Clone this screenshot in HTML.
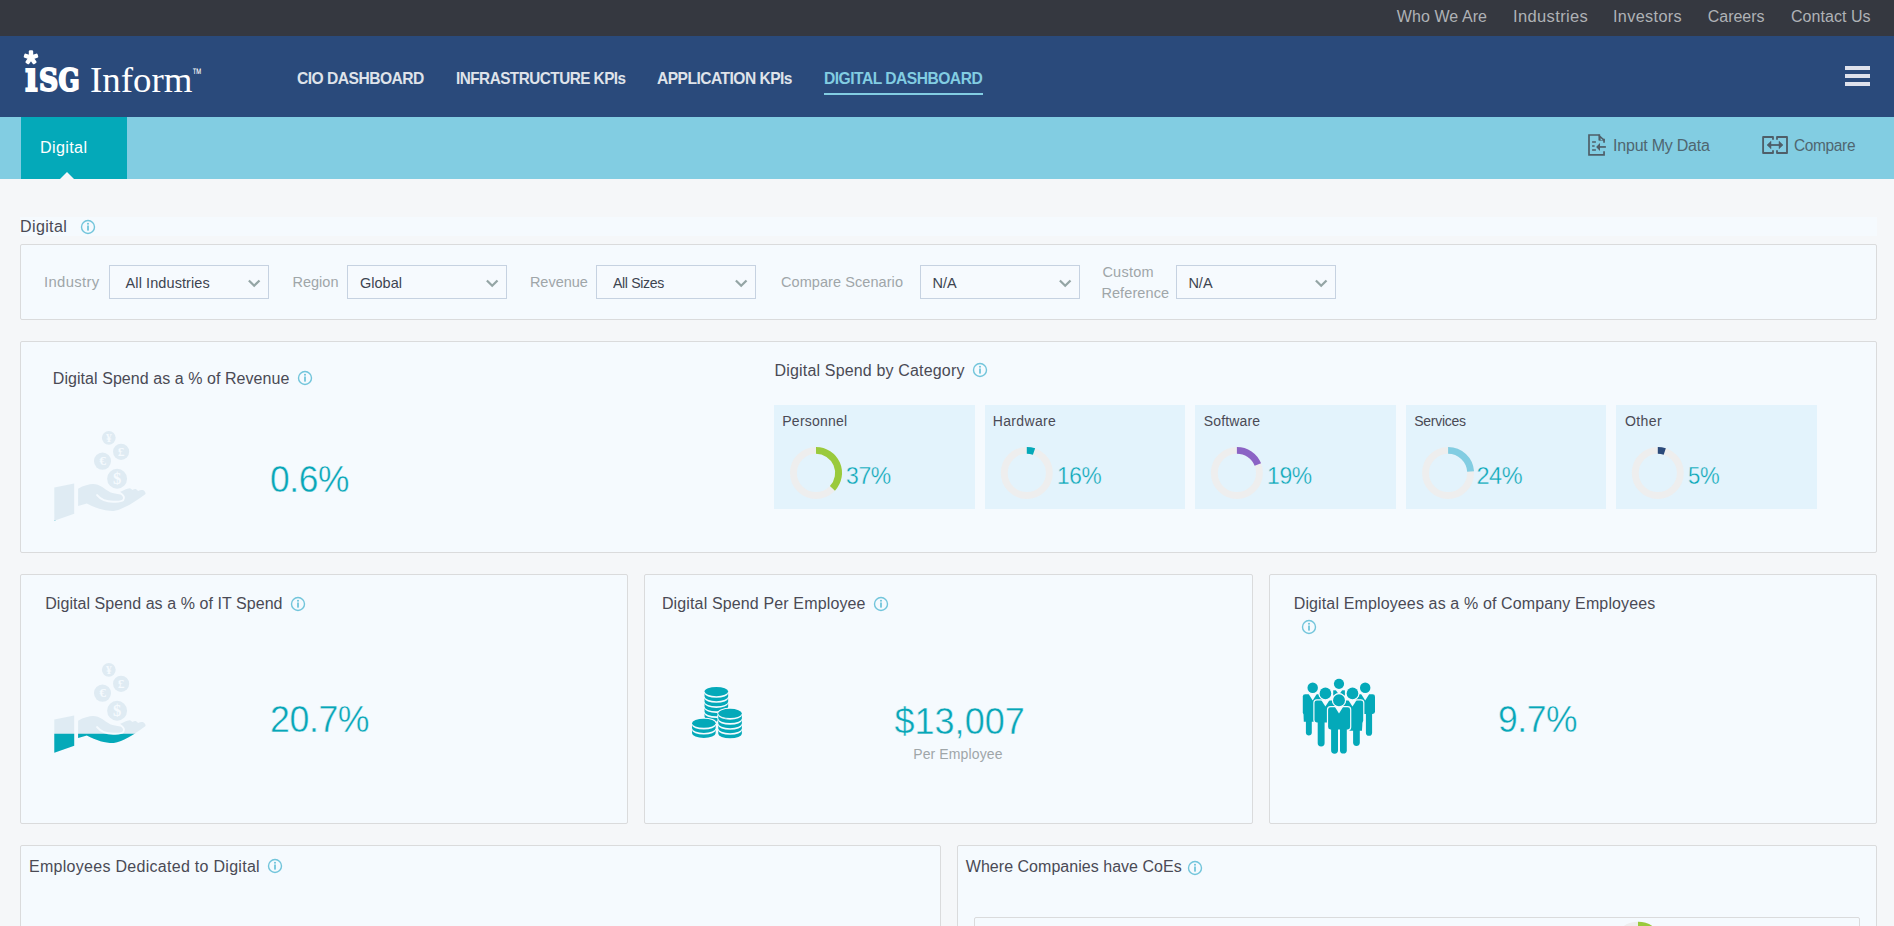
<!DOCTYPE html>
<html lang="en"><head><meta charset="utf-8"><title>ISG Inform - Digital Dashboard</title>
<style>

html,body{margin:0;padding:0;}
body{width:1894px;height:926px;overflow:hidden;background:#f5f7f9;font-family:"Liberation Sans",sans-serif;position:relative;}
.abs{position:absolute;}
.t{position:absolute;white-space:nowrap;transform-origin:0 50%;display:block;margin:0;padding:0;font-weight:400;}
#topbar{position:absolute;left:0;top:0;width:1894px;height:36px;background:#353840;}
#navbar{position:absolute;left:0;top:36px;width:1894px;height:81px;background:#2a4a7b;}
#subbar{position:absolute;left:0;top:117px;width:1894px;height:62px;background:#82cde2;}
#tab{position:absolute;left:21px;top:117px;width:106px;height:62px;background:#04a9b9;}
#tri{position:absolute;left:60px;top:172px;width:0;height:0;border-left:7px solid transparent;border-right:7px solid transparent;border-bottom:7px solid #f5f7f9;}
#navline{position:absolute;left:824px;top:93px;width:159px;height:2px;background:#82cde2;}
.hb{position:absolute;left:1845px;width:25px;height:4px;background:#dfe2ec;}
#strip{position:absolute;left:20px;top:217px;width:1857px;height:19px;background:#f5fafe;}
.panel{position:absolute;box-sizing:border-box;border-radius:2px;background:#f5fafe;border:1px solid #dadbdc;}
.sel{position:absolute;box-sizing:border-box;top:265px;width:160px;height:34px;border:1px solid #c6d2e1;background:#f6fafe;}
.cat{position:absolute;top:405px;height:104px;width:200.4px;background:#e3f3fc;}
svg{position:absolute;overflow:visible;}

</style></head>
<body>
<div id="topbar"></div><div id="navbar"></div><div id="subbar"></div><div id="tab"></div><div id="tri"></div><div id="navline"></div>
<div class="hb" style="top:66px"></div>
<div class="hb" style="top:74px"></div>
<div class="hb" style="top:82px"></div>
<svg style="left:0;top:0" width="260" height="117"><rect x="28.8" y="50.300000000000004" width="4.4" height="7.8" rx="1.3" fill="#fff" transform="rotate(0 31 57.6)"/><rect x="28.8" y="50.300000000000004" width="4.4" height="7.8" rx="1.3" fill="#fff" transform="rotate(72 31 57.6)"/><rect x="28.8" y="50.300000000000004" width="4.4" height="7.8" rx="1.3" fill="#fff" transform="rotate(144 31 57.6)"/><rect x="28.8" y="50.300000000000004" width="4.4" height="7.8" rx="1.3" fill="#fff" transform="rotate(216 31 57.6)"/><rect x="28.8" y="50.300000000000004" width="4.4" height="7.8" rx="1.3" fill="#fff" transform="rotate(288 31 57.6)"/><text x="25.1" y="90.8" font-size="42" stroke-width="2" textLength="12.6" font-family="DejaVu Serif, Liberation Serif, serif" font-weight="700" fill="#fff" stroke="#fff" stroke-linejoin="miter" lengthAdjust="spacingAndGlyphs">ı</text><text x="38.9" y="90.7" font-size="31.3" stroke-width="2" textLength="19.2" font-family="DejaVu Serif, Liberation Serif, serif" font-weight="700" fill="#fff" stroke="#fff" stroke-linejoin="miter" lengthAdjust="spacingAndGlyphs">S</text><text x="58.6" y="90.7" font-size="31.3" stroke-width="2" textLength="21.2" font-family="DejaVu Serif, Liberation Serif, serif" font-weight="700" fill="#fff" stroke="#fff" stroke-linejoin="miter" lengthAdjust="spacingAndGlyphs">G</text><text x="90" y="91.9" font-family="Liberation Serif, serif" font-size="36" fill="#fff" textLength="102.5" lengthAdjust="spacingAndGlyphs">Inform</text><text x="192" y="77.6" font-family="Liberation Sans, sans-serif" font-size="14" fill="#fff" textLength="9.5" lengthAdjust="spacingAndGlyphs">™</text></svg>
<svg style="left:0;top:0" width="1894" height="926"><path d="M1604.05 142.7 V139.6 H1599.3 V135 H1589 V154.95 H1604.05 V151.2" fill="none" stroke="#4f5e68" stroke-width="1.7" stroke-linejoin="miter"/><path d="M1598.7 134.2 L1604.9 139.9 L1604.9 140.4 L1599.3 140.4 Z" fill="#4f5e68"/><path d="M1600.6 140.3 L1602.9 140.3 L1600.6 138.1 Z" fill="#82cde2"/><path d="M1599.5 146.95 H1605.9" fill="none" stroke="#4f5e68" stroke-width="1.7"/><path d="M1596.1 146.95 L1600 143 L1600 150.9 Z" fill="#4f5e68"/><path d="M1592.1 142 H1595.9 M1592.1 146 H1594.6 M1592.1 150 H1595.9" fill="none" stroke="#4f5e68" stroke-width="1.5"/></svg>
<svg style="left:0;top:0" width="1894" height="926"><path d="M1773 139.7 V137 H1763.1 V153 H1773 V150.2 M1777 139.7 V137 H1787 V153 H1777 V150.2" fill="none" stroke="#4f5e68" stroke-width="1.85" stroke-linejoin="round"/><path d="M1770 145 H1780" fill="none" stroke="#4f5e68" stroke-width="1.8"/><path d="M1767 145 L1771 141.2 L1771 148.8 Z M1783.05 145 L1779.05 141.2 L1779.05 148.8 Z" fill="#4f5e68" stroke="#4f5e68" stroke-width="0.5" stroke-linejoin="round"/></svg>
<div id="strip"></div>
<div class="panel" style="left:20px;top:244px;width:1857px;height:76px"></div>
<div class="panel" style="left:20px;top:341px;width:1857px;height:212px"></div>
<div class="panel" style="left:20px;top:574px;width:608px;height:250px"></div>
<div class="panel" style="left:644px;top:574px;width:609px;height:250px"></div>
<div class="panel" style="left:1269px;top:574px;width:608px;height:250px"></div>
<div class="panel" style="left:20px;top:845px;width:921px;height:120px"></div>
<div class="panel" style="left:957px;top:845px;width:920px;height:120px"></div>
<div class="panel" style="left:974px;top:917px;width:886px;height:60px"></div>
<div class="sel" style="left:109px"></div>
<div class="sel" style="left:347px"></div>
<div class="sel" style="left:596px"></div>
<div class="sel" style="left:920px"></div>
<div class="sel" style="left:1176px"></div>
<svg style="left:248px;top:279px" width="13" height="9" viewBox="0 0 13 9"><path d="M0.9 1.5 L6.2 6.7 L11.5 1.5" fill="none" stroke="#94a5a5" stroke-width="2.3" stroke-linecap="butt" stroke-linejoin="miter"/></svg>
<svg style="left:486px;top:279px" width="13" height="9" viewBox="0 0 13 9"><path d="M0.9 1.5 L6.2 6.7 L11.5 1.5" fill="none" stroke="#94a5a5" stroke-width="2.3" stroke-linecap="butt" stroke-linejoin="miter"/></svg>
<svg style="left:735px;top:279px" width="13" height="9" viewBox="0 0 13 9"><path d="M0.9 1.5 L6.2 6.7 L11.5 1.5" fill="none" stroke="#94a5a5" stroke-width="2.3" stroke-linecap="butt" stroke-linejoin="miter"/></svg>
<svg style="left:1059px;top:279px" width="13" height="9" viewBox="0 0 13 9"><path d="M0.9 1.5 L6.2 6.7 L11.5 1.5" fill="none" stroke="#94a5a5" stroke-width="2.3" stroke-linecap="butt" stroke-linejoin="miter"/></svg>
<svg style="left:1315px;top:279px" width="13" height="9" viewBox="0 0 13 9"><path d="M0.9 1.5 L6.2 6.7 L11.5 1.5" fill="none" stroke="#94a5a5" stroke-width="2.3" stroke-linecap="butt" stroke-linejoin="miter"/></svg>
<div class="cat" style="left:774px;width:201px"></div>
<div class="cat" style="left:985px;width:200px"></div>
<div class="cat" style="left:1195px;width:201px"></div>
<div class="cat" style="left:1406px;width:200px"></div>
<div class="cat" style="left:1616px;width:201px"></div>
<svg style="left:0;top:0" width="1894" height="926"><circle cx="816" cy="472.9" r="22.55" fill="none" stroke="#eeeeee" stroke-width="6.9"/><path d="M816 450.34999999999997 A22.55 22.55 0 0 1 832.44 488.34" fill="none" stroke="#9aca3c" stroke-width="6.9"/></svg>
<svg style="left:0;top:0" width="1894" height="926"><circle cx="1026.8" cy="472.9" r="22.55" fill="none" stroke="#eeeeee" stroke-width="6.9"/><path d="M1026.8 450.34999999999997 A22.55 22.55 0 0 1 1034.04 451.54" fill="none" stroke="#04a9b9" stroke-width="6.9"/></svg>
<svg style="left:0;top:0" width="1894" height="926"><circle cx="1236.9" cy="472.9" r="22.55" fill="none" stroke="#eeeeee" stroke-width="6.9"/><path d="M1236.9 450.34999999999997 A22.55 22.55 0 0 1 1257.87 464.60" fill="none" stroke="#8b63c5" stroke-width="6.9"/></svg>
<svg style="left:0;top:0" width="1894" height="926"><circle cx="1448.1" cy="472.9" r="22.55" fill="none" stroke="#eeeeee" stroke-width="6.9"/><path d="M1448.1 450.34999999999997 A22.55 22.55 0 0 1 1470.61 471.48" fill="none" stroke="#82cde2" stroke-width="6.9"/></svg>
<svg style="left:0;top:0" width="1894" height="926"><circle cx="1657.8" cy="472.9" r="22.55" fill="none" stroke="#eeeeee" stroke-width="6.9"/><path d="M1657.8 450.34999999999997 A22.55 22.55 0 0 1 1664.77 451.45" fill="none" stroke="#2a4a7b" stroke-width="6.9"/></svg>
<svg style="left:0;top:0" width="1894" height="926"><circle cx="1638" cy="947.8" r="22.55" fill="none" stroke="#eeeeee" stroke-width="6.9"/><path d="M1638 925.25 A22.55 22.55 0 0 1 1660.55 947.8" fill="none" stroke="#9aca3c" stroke-width="6.9"/></svg>
<svg style="left:80px;top:219px" width="16" height="16" viewBox="-8 -8 16 16"><circle cx="0" cy="0" r="6.5" fill="none" stroke="#72c5db" stroke-width="1.4"/><rect x="-0.9" y="-1.5" width="1.8" height="5.1" fill="#72c5db"/><circle cx="0" cy="-3.2" r="1.05" fill="#72c5db"/></svg>
<svg style="left:297px;top:370px" width="16" height="16" viewBox="-8 -8 16 16"><circle cx="0" cy="0" r="6.5" fill="none" stroke="#72c5db" stroke-width="1.4"/><rect x="-0.9" y="-1.5" width="1.8" height="5.1" fill="#72c5db"/><circle cx="0" cy="-3.2" r="1.05" fill="#72c5db"/></svg>
<svg style="left:971.8px;top:362px" width="16" height="16" viewBox="-8 -8 16 16"><circle cx="0" cy="0" r="6.5" fill="none" stroke="#72c5db" stroke-width="1.4"/><rect x="-0.9" y="-1.5" width="1.8" height="5.1" fill="#72c5db"/><circle cx="0" cy="-3.2" r="1.05" fill="#72c5db"/></svg>
<svg style="left:290px;top:595.8px" width="16" height="16" viewBox="-8 -8 16 16"><circle cx="0" cy="0" r="6.5" fill="none" stroke="#72c5db" stroke-width="1.4"/><rect x="-0.9" y="-1.5" width="1.8" height="5.1" fill="#72c5db"/><circle cx="0" cy="-3.2" r="1.05" fill="#72c5db"/></svg>
<svg style="left:873px;top:595.7px" width="16" height="16" viewBox="-8 -8 16 16"><circle cx="0" cy="0" r="6.5" fill="none" stroke="#72c5db" stroke-width="1.4"/><rect x="-0.9" y="-1.5" width="1.8" height="5.1" fill="#72c5db"/><circle cx="0" cy="-3.2" r="1.05" fill="#72c5db"/></svg>
<svg style="left:1301px;top:619.2px" width="16" height="16" viewBox="-8 -8 16 16"><circle cx="0" cy="0" r="6.5" fill="none" stroke="#72c5db" stroke-width="1.4"/><rect x="-0.9" y="-1.5" width="1.8" height="5.1" fill="#72c5db"/><circle cx="0" cy="-3.2" r="1.05" fill="#72c5db"/></svg>
<svg style="left:266.8px;top:858.1px" width="16" height="16" viewBox="-8 -8 16 16"><circle cx="0" cy="0" r="6.5" fill="none" stroke="#72c5db" stroke-width="1.4"/><rect x="-0.9" y="-1.5" width="1.8" height="5.1" fill="#72c5db"/><circle cx="0" cy="-3.2" r="1.05" fill="#72c5db"/></svg>
<svg style="left:1187px;top:859.5px" width="16" height="16" viewBox="-8 -8 16 16"><circle cx="0" cy="0" r="6.5" fill="none" stroke="#72c5db" stroke-width="1.4"/><rect x="-0.9" y="-1.5" width="1.8" height="5.1" fill="#72c5db"/><circle cx="0" cy="-3.2" r="1.05" fill="#72c5db"/></svg>
<svg style="left:0;top:0" width="1894" height="926"><defs><clipPath id="c1"><rect x="0" y="520.5" width="1894" height="200"/></clipPath></defs><g fill="#dfebf3"><polygon points="54.3,487.5 74.2,483.5 74.2,513.8 54.3,520.7"/><path d="M78.1 488.7 C83.5 485.6 89.4 484.1 93.0 484.1 C100.1 484.1 103.6 488.9 110.2 492.2 C113.1 493.4 116.7 493.6 120.3 494.6 L119.9 492.0 C123.8 490.1 126.8 488.7 129.5 488.2 C131.0 488.2 131.7 489.4 132.4 490.1 C133.6 489.4 134.8 488.9 135.7 489.1 C136.9 489.6 137.5 490.6 138.1 491.0 C139.9 490.3 141.7 489.8 142.8 490.1 C144.6 490.8 145.8 492.5 145.5 494.1 C141.7 497.2 134.5 502.0 128.6 505.3 C123.8 507.9 117.9 510.5 113.7 511.0 C106.0 511.2 96.5 508.5 86.8 503.4 L78.1 506.0 Z"/><circle cx="108.8" cy="437.8" r="6.89"/><circle cx="121.1" cy="451.8" r="8.08"/><circle cx="102.5" cy="461.1" r="8.55"/><circle cx="117.1" cy="478.7" r="9.98"/></g><g fill="#04a9b9" clip-path="url(#c1)"><polygon points="54.3,487.5 74.2,483.5 74.2,513.8 54.3,520.7"/><path d="M78.1 488.7 C83.5 485.6 89.4 484.1 93.0 484.1 C100.1 484.1 103.6 488.9 110.2 492.2 C113.1 493.4 116.7 493.6 120.3 494.6 L119.9 492.0 C123.8 490.1 126.8 488.7 129.5 488.2 C131.0 488.2 131.7 489.4 132.4 490.1 C133.6 489.4 134.8 488.9 135.7 489.1 C136.9 489.6 137.5 490.6 138.1 491.0 C139.9 490.3 141.7 489.8 142.8 490.1 C144.6 490.8 145.8 492.5 145.5 494.1 C141.7 497.2 134.5 502.0 128.6 505.3 C123.8 507.9 117.9 510.5 113.7 511.0 C106.0 511.2 96.5 508.5 86.8 503.4 L78.1 506.0 Z"/><circle cx="108.8" cy="437.8" r="6.89"/><circle cx="121.1" cy="451.8" r="8.08"/><circle cx="102.5" cy="461.1" r="8.55"/><circle cx="117.1" cy="478.7" r="9.98"/></g><path d="M97.1 495.1 C101.3 500.2 107.2 501.7 113.1 501.7 C117.9 501.7 121.5 502.0 123.2 500.2 C125.0 497.8 123.8 495.1 119.9 492.9" fill="none" stroke="#f5fafe" stroke-width="1.9" stroke-linecap="round"/><text x="108.8" y="441.5" font-size="11.5" font-weight="700" text-anchor="middle" font-family="Liberation Serif, serif" fill="#f5fafe">¥</text><text x="121.1" y="456.2" font-size="13.5" font-weight="700" text-anchor="middle" font-family="Liberation Serif, serif" fill="#f5fafe">£</text><text x="102.5" y="465.4" font-size="13.5" font-weight="700" text-anchor="middle" font-family="Liberation Serif, serif" fill="#f5fafe">€</text><text x="117.1" y="484.0" font-size="16.5" font-weight="700" text-anchor="middle" font-family="Liberation Serif, serif" fill="#f5fafe">$</text></svg>
<svg style="left:0;top:0" width="1894" height="926"><defs><clipPath id="c2"><rect x="0" y="733.7" width="1894" height="200"/></clipPath></defs><g fill="#dfebf3"><polygon points="54.3,719.5 74.2,715.5 74.2,745.8 54.3,752.7"/><path d="M78.1 720.7 C83.5 717.6 89.4 716.1 93.0 716.1 C100.1 716.1 103.6 720.9 110.2 724.2 C113.1 725.4 116.7 725.6 120.3 726.6 L119.9 724.0 C123.8 722.1 126.8 720.7 129.5 720.2 C131.0 720.2 131.7 721.4 132.4 722.1 C133.6 721.4 134.8 720.9 135.7 721.1 C136.9 721.6 137.5 722.6 138.1 723.0 C139.9 722.3 141.7 721.8 142.8 722.1 C144.6 722.8 145.8 724.5 145.5 726.1 C141.7 729.2 134.5 734.0 128.6 737.3 C123.8 739.9 117.9 742.5 113.7 743.0 C106.0 743.2 96.5 740.5 86.8 735.4 L78.1 738.0 Z"/><circle cx="108.8" cy="669.8" r="6.89"/><circle cx="121.1" cy="683.8" r="8.08"/><circle cx="102.5" cy="693.1" r="8.55"/><circle cx="117.1" cy="710.7" r="9.98"/></g><g fill="#04a9b9" clip-path="url(#c2)"><polygon points="54.3,719.5 74.2,715.5 74.2,745.8 54.3,752.7"/><path d="M78.1 720.7 C83.5 717.6 89.4 716.1 93.0 716.1 C100.1 716.1 103.6 720.9 110.2 724.2 C113.1 725.4 116.7 725.6 120.3 726.6 L119.9 724.0 C123.8 722.1 126.8 720.7 129.5 720.2 C131.0 720.2 131.7 721.4 132.4 722.1 C133.6 721.4 134.8 720.9 135.7 721.1 C136.9 721.6 137.5 722.6 138.1 723.0 C139.9 722.3 141.7 721.8 142.8 722.1 C144.6 722.8 145.8 724.5 145.5 726.1 C141.7 729.2 134.5 734.0 128.6 737.3 C123.8 739.9 117.9 742.5 113.7 743.0 C106.0 743.2 96.5 740.5 86.8 735.4 L78.1 738.0 Z"/><circle cx="108.8" cy="669.8" r="6.89"/><circle cx="121.1" cy="683.8" r="8.08"/><circle cx="102.5" cy="693.1" r="8.55"/><circle cx="117.1" cy="710.7" r="9.98"/></g><path d="M97.1 727.1 C101.3 732.2 107.2 733.7 113.1 733.7 C117.9 733.7 121.5 734.0 123.2 732.2 C125.0 729.8 123.8 727.1 119.9 724.9" fill="none" stroke="#f5fafe" stroke-width="1.9" stroke-linecap="round"/><text x="108.8" y="673.5" font-size="11.5" font-weight="700" text-anchor="middle" font-family="Liberation Serif, serif" fill="#f5fafe">¥</text><text x="121.1" y="688.2" font-size="13.5" font-weight="700" text-anchor="middle" font-family="Liberation Serif, serif" fill="#f5fafe">£</text><text x="102.5" y="697.4" font-size="13.5" font-weight="700" text-anchor="middle" font-family="Liberation Serif, serif" fill="#f5fafe">€</text><text x="117.1" y="716.0" font-size="16.5" font-weight="700" text-anchor="middle" font-family="Liberation Serif, serif" fill="#f5fafe">$</text></svg>
<svg style="left:0;top:0" width="1894" height="926"><path d="M704.56 713.42 L704.56 716.82 A11.8 4.6 0 0 0 728.16 716.82 L728.16 713.42 A11.8 4.6 0 0 1 704.56 713.42 Z" fill="#04a9b9"/><path d="M704.56 708.37 L704.56 711.77 A11.8 4.6 0 0 0 728.16 711.77 L728.16 708.37 A11.8 4.6 0 0 1 704.56 708.37 Z" fill="#04a9b9"/><path d="M704.56 703.32 L704.56 706.72 A11.8 4.6 0 0 0 728.16 706.72 L728.16 703.32 A11.8 4.6 0 0 1 704.56 703.32 Z" fill="#04a9b9"/><path d="M704.56 698.27 L704.56 701.67 A11.8 4.6 0 0 0 728.16 701.67 L728.16 698.27 A11.8 4.6 0 0 1 704.56 698.27 Z" fill="#04a9b9"/><path d="M704.56 693.22 L704.56 696.62 A11.8 4.6 0 0 0 728.16 696.62 L728.16 693.22 A11.8 4.6 0 0 1 704.56 693.22 Z" fill="#04a9b9"/><ellipse cx="716.36" cy="691.57" rx="11.8" ry="4.6" fill="#04a9b9" /><g stroke="#f5fafe" stroke-width="2" ><path d="M718.26 730.24 L718.26 733.64 A11.8 4.6 0 0 0 741.86 733.64 L741.86 730.24 A11.8 4.6 0 0 1 718.26 730.24 Z" fill="#04a9b9"/><path d="M718.26 725.19 L718.26 728.59 A11.8 4.6 0 0 0 741.86 728.59 L741.86 725.19 A11.8 4.6 0 0 1 718.26 725.19 Z" fill="#04a9b9"/><path d="M718.26 720.14 L718.26 723.54 A11.8 4.6 0 0 0 741.86 723.54 L741.86 720.14 A11.8 4.6 0 0 1 718.26 720.14 Z" fill="#04a9b9"/><path d="M718.26 715.09 L718.26 718.49 A11.8 4.6 0 0 0 741.86 718.49 L741.86 715.09 A11.8 4.6 0 0 1 718.26 715.09 Z" fill="#04a9b9"/><ellipse cx="730.06" cy="713.44" rx="11.8" ry="4.6" fill="#04a9b9" /><path d="M692.02 729.96 L692.02 733.36 A11.8 4.6 0 0 0 715.62 733.36 L715.62 729.96 A11.8 4.6 0 0 1 692.02 729.96 Z" fill="#04a9b9"/><path d="M692.02 724.91 L692.02 728.31 A11.8 4.6 0 0 0 715.62 728.31 L715.62 724.91 A11.8 4.6 0 0 1 692.02 724.91 Z" fill="#04a9b9"/><ellipse cx="703.82" cy="723.26" rx="11.8" ry="4.6" fill="#04a9b9" /></g><path d="M718.26 730.24 L718.26 733.64 A11.8 4.6 0 0 0 741.86 733.64 L741.86 730.24 A11.8 4.6 0 0 1 718.26 730.24 Z" fill="#04a9b9"/><path d="M718.26 725.19 L718.26 728.59 A11.8 4.6 0 0 0 741.86 728.59 L741.86 725.19 A11.8 4.6 0 0 1 718.26 725.19 Z" fill="#04a9b9"/><path d="M718.26 720.14 L718.26 723.54 A11.8 4.6 0 0 0 741.86 723.54 L741.86 720.14 A11.8 4.6 0 0 1 718.26 720.14 Z" fill="#04a9b9"/><path d="M718.26 715.09 L718.26 718.49 A11.8 4.6 0 0 0 741.86 718.49 L741.86 715.09 A11.8 4.6 0 0 1 718.26 715.09 Z" fill="#04a9b9"/><ellipse cx="730.06" cy="713.44" rx="11.8" ry="4.6" fill="#04a9b9" /><path d="M692.02 729.96 L692.02 733.36 A11.8 4.6 0 0 0 715.62 733.36 L715.62 729.96 A11.8 4.6 0 0 1 692.02 729.96 Z" fill="#04a9b9"/><path d="M692.02 724.91 L692.02 728.31 A11.8 4.6 0 0 0 715.62 728.31 L715.62 724.91 A11.8 4.6 0 0 1 692.02 724.91 Z" fill="#04a9b9"/><ellipse cx="703.82" cy="723.26" rx="11.8" ry="4.6" fill="#04a9b9" /></svg>
<svg style="left:0;top:0" width="1894" height="926"><circle cx="1339.0" cy="683.8" r="5.11" fill="#04a9b9"/><path d="M1333.2 690.3 L1344.9 690.3 L1344.9 695.6 L1333.2 695.6 Z" fill="#04a9b9"/><path d="M1335.6 689.7 L1339.0 694.7 L1342.5 689.7 Z" fill="#f5fafe"/><g fill="#f5fafe" stroke="#f5fafe" stroke-width="2.4"><path d="M1305.9 711.7 L1305.9 732.8 A2.97 2.97 0 0 0 1311.8 732.8 L1311.8 711.7 Z"/><path d="M1303.4 710.7 L1303.8 721.8 L1314.5 721.8 L1321.9 710.7 Z"/><rect x="1302.8" y="694.2" width="19.7" height="20.4" rx="2.4" ry="2.4"/><circle cx="1312.7" cy="687.7" r="5.23"/></g><g fill="#04a9b9"><path d="M1305.9 711.7 L1305.9 732.8 A2.97 2.97 0 0 0 1311.8 732.8 L1311.8 711.7 Z"/><path d="M1303.4 710.7 L1303.8 721.8 L1314.5 721.8 L1321.9 710.7 Z"/><rect x="1302.8" y="694.2" width="19.7" height="20.4" rx="2.4" ry="2.4"/></g><path d="M1308.5 693.7 L1312.7 700.4 L1316.9 693.7 Z" fill="#f5fafe"/><g fill="#f5fafe" stroke="#f5fafe" stroke-width="2"><circle cx="1312.7" cy="687.7" r="5.23"/></g><g fill="#04a9b9"><circle cx="1312.7" cy="687.7" r="5.23"/></g><g fill="#f5fafe" stroke="#f5fafe" stroke-width="2.4"><path d="M1365.9 711.1 L1365.9 732.7 A3.09 3.09 0 0 0 1372.1 732.7 L1372.1 711.1 Z"/><rect x="1355.3" y="694.2" width="19.7" height="19.8" rx="2.4" ry="2.4"/><circle cx="1365.2" cy="687.7" r="5.23"/></g><g fill="#04a9b9"><path d="M1365.9 711.1 L1365.9 732.7 A3.09 3.09 0 0 0 1372.1 732.7 L1372.1 711.1 Z"/><rect x="1355.3" y="694.2" width="19.7" height="19.8" rx="2.4" ry="2.4"/></g><path d="M1361.0 693.7 L1365.2 700.4 L1369.4 693.7 Z" fill="#f5fafe"/><g fill="#f5fafe" stroke="#f5fafe" stroke-width="2"><circle cx="1365.2" cy="687.7" r="5.23"/></g><g fill="#04a9b9"><circle cx="1365.2" cy="687.7" r="5.23"/></g><g fill="#f5fafe" stroke="#f5fafe" stroke-width="2.4"><path d="M1317.7 719.4 L1317.7 743.0 A3.45 3.45 0 0 0 1324.6 743.0 L1324.6 719.4 Z"/><rect x="1314.5" y="700.4" width="21.9" height="22.0" rx="2.4" ry="2.4"/><circle cx="1325.4" cy="693.4" r="5.82"/></g><g fill="#04a9b9"><path d="M1317.7 719.4 L1317.7 743.0 A3.45 3.45 0 0 0 1324.6 743.0 L1324.6 719.4 Z"/><rect x="1314.5" y="700.4" width="21.9" height="22.0" rx="2.4" ry="2.4"/></g><path d="M1321.2 699.9 L1325.4 706.6 L1329.6 699.9 Z" fill="#f5fafe"/><g fill="#f5fafe" stroke="#f5fafe" stroke-width="2"><circle cx="1325.4" cy="693.4" r="5.82"/></g><g fill="#04a9b9"><circle cx="1325.4" cy="693.4" r="5.82"/></g><g fill="#f5fafe" stroke="#f5fafe" stroke-width="2.4"><path d="M1353.1 720.0 L1353.1 743.1 A3.39 3.39 0 0 0 1359.8 743.1 L1359.8 720.0 Z"/><path d="M1342.4 719.0 L1349.5 730.7 L1362.0 730.7 L1362.6 719.0 Z"/><rect x="1341.8" y="700.4" width="21.4" height="22.6" rx="2.4" ry="2.4"/><circle cx="1352.5" cy="693.4" r="5.82"/></g><g fill="#04a9b9"><path d="M1353.1 720.0 L1353.1 743.1 A3.39 3.39 0 0 0 1359.8 743.1 L1359.8 720.0 Z"/><path d="M1342.4 719.0 L1349.5 730.7 L1362.0 730.7 L1362.6 719.0 Z"/><rect x="1341.8" y="700.4" width="21.4" height="22.6" rx="2.4" ry="2.4"/></g><path d="M1348.3 699.9 L1352.5 706.6 L1356.7 699.9 Z" fill="#f5fafe"/><g fill="#f5fafe" stroke="#f5fafe" stroke-width="2"><circle cx="1352.5" cy="693.4" r="5.82"/></g><g fill="#04a9b9"><circle cx="1352.5" cy="693.4" r="5.82"/></g><g fill="#f5fafe" stroke="#f5fafe" stroke-width="2.4"><path d="M1331.1 726.5 L1331.1 750.2 A3.45 3.45 0 0 0 1338.0 750.2 L1338.0 726.5 Z"/><path d="M1340.0 726.5 L1340.0 750.2 A3.39 3.39 0 0 0 1346.8 750.2 L1346.8 726.5 Z"/><rect x="1328.1" y="707.3" width="22.0" height="22.2" rx="2.4" ry="2.4"/><circle cx="1339.0" cy="700.2" r="5.94"/></g><g fill="#04a9b9"><path d="M1331.1 726.5 L1331.1 750.2 A3.45 3.45 0 0 0 1338.0 750.2 L1338.0 726.5 Z"/><path d="M1340.0 726.5 L1340.0 750.2 A3.39 3.39 0 0 0 1346.8 750.2 L1346.8 726.5 Z"/><rect x="1328.1" y="707.3" width="22.0" height="22.2" rx="2.4" ry="2.4"/></g><path d="M1334.8 706.8 L1339.0 713.5 L1343.2 706.8 Z" fill="#f5fafe"/><g fill="#f5fafe" stroke="#f5fafe" stroke-width="2"><circle cx="1339.0" cy="700.2" r="5.94"/></g><g fill="#04a9b9"><circle cx="1339.0" cy="700.2" r="5.94"/></g></svg>
<div id="texts">
<nav id="toplinks"><a class="t" style="left:1396.80px;top:6.00px;font-size:16px;line-height:21px;color:#afb2b6;letter-spacing:0.078px;">Who We Are</a><a class="t" style="left:1512.77px;top:6.00px;font-size:16px;line-height:21px;color:#afb2b6;letter-spacing:0.350px;transform:scaleX(1.0319);">Industries</a><a class="t" style="left:1612.89px;top:6.00px;font-size:16px;line-height:21px;color:#afb2b6;letter-spacing:0.350px;transform:scaleX(1.0133);">Investors</a><a class="t" style="left:1707.80px;top:6.00px;font-size:16px;line-height:21px;color:#afb2b6;letter-spacing:-0.034px;">Careers</a><a class="t" style="left:1790.90px;top:6.00px;font-size:16px;line-height:21px;color:#afb2b6;letter-spacing:0.062px;">Contact Us</a></nav>
<nav id="mainnav"><a class="t" style="left:297.40px;top:68.00px;font-size:16.5px;line-height:21px;color:#dfe3ea;font-weight:700;letter-spacing:-0.550px;transform:scaleX(0.9461);">CIO DASHBOARD</a><a class="t" style="left:455.67px;top:68.00px;font-size:16.5px;line-height:21px;color:#dfe3ea;font-weight:700;letter-spacing:-0.550px;transform:scaleX(0.9268);">INFRASTRUCTURE KPIs</a><a class="t" style="left:657.40px;top:68.00px;font-size:16.5px;line-height:21px;color:#dfe3ea;font-weight:700;letter-spacing:-0.550px;transform:scaleX(0.9432);">APPLICATION KPIs</a><a class="t" style="left:823.65px;top:68.00px;font-size:16.5px;line-height:21px;color:#82cde2;font-weight:700;letter-spacing:-0.550px;transform:scaleX(0.9474);">DIGITAL DASHBOARD</a></nav>
<div id="tabs"><a class="t" style="left:40.39px;top:137.00px;font-size:16px;line-height:21px;color:#ffffff;letter-spacing:0.350px;transform:scaleX(1.0087);">Digital</a></div>
<div id="actions"><a class="t" style="left:1613.10px;top:135.00px;font-size:16px;line-height:21px;color:#4f6670;letter-spacing:-0.234px;">Input My Data</a><a class="t" style="left:1794.40px;top:135.00px;font-size:16px;line-height:21px;color:#4f6670;letter-spacing:-0.350px;transform:scaleX(0.9654);">Compare</a></div>
<main>
<h1 class="t" style="left:20.00px;top:216.00px;font-size:16px;line-height:21px;color:#4a4a55;letter-spacing:0.350px;transform:scaleX(1.0043);">Digital</h1>
<form id="filters"><label class="t" style="left:43.98px;top:273.00px;font-size:14.5px;line-height:19px;color:#9fa6a9;letter-spacing:0.350px;transform:scaleX(1.0227);">Industry</label><label class="t" style="left:292.50px;top:273.00px;font-size:14.5px;line-height:19px;color:#9fa6a9;">Region</label><label class="t" style="left:529.90px;top:273.00px;font-size:14.5px;line-height:19px;color:#9fa6a9;">Revenue</label><label class="t" style="left:781.00px;top:273.00px;font-size:14.5px;line-height:19px;color:#9fa6a9;letter-spacing:0.071px;">Compare Scenario</label><label class="t" style="left:1102.40px;top:263.00px;font-size:14.5px;line-height:19px;color:#9fa6a9;letter-spacing:0.244px;">Custom</label><label class="t" style="left:1101.40px;top:284.00px;font-size:14.5px;line-height:19px;color:#9fa6a9;letter-spacing:0.096px;">Reference</label><span class="t" style="left:125.60px;top:274.00px;font-size:14.5px;line-height:19px;color:#3d4450;letter-spacing:0.088px;">All Industries</span><span class="t" style="left:360.00px;top:274.00px;font-size:14.5px;line-height:19px;color:#3d4450;">Global</span><span class="t" style="left:613.30px;top:274.00px;font-size:14.5px;line-height:19px;color:#3d4450;letter-spacing:-0.350px;transform:scaleX(0.9724);">All Sizes</span><span class="t" style="left:932.60px;top:274.00px;font-size:14.5px;line-height:19px;color:#3d4450;">N/A</span><span class="t" style="left:1188.40px;top:274.00px;font-size:14.5px;line-height:19px;color:#3d4450;">N/A</span></form>
<section id="revenue"><h2 class="t" style="left:52.80px;top:368.00px;font-size:16px;line-height:21px;color:#4a4a55;letter-spacing:0.056px;">Digital Spend as a % of Revenue</h2><div class="t" style="left:269.82px;top:456.00px;font-size:36px;line-height:47px;color:#08a6b7;letter-spacing:-0.432px;transform:scaleX(0.9829);-webkit-text-stroke:0.45px #f5fafe;">0.6%</div></section>
<section id="category"><h2 class="t" style="left:774.60px;top:360.00px;font-size:16px;line-height:21px;color:#4a4a55;letter-spacing:0.163px;">Digital Spend by Category</h2><div class="catitem"><h3 class="t" style="left:782.30px;top:412.00px;font-size:14px;line-height:18px;color:#4a4a55;letter-spacing:0.234px;">Personnel</h3><div class="t" style="left:846.40px;top:461.00px;font-size:23.5px;line-height:31px;color:#08a6b7;letter-spacing:-0.350px;transform:scaleX(0.9776);-webkit-text-stroke:0.35px #e3f3fc;">37%</div></div><div class="catitem"><h3 class="t" style="left:992.70px;top:412.00px;font-size:14px;line-height:18px;color:#4a4a55;letter-spacing:0.350px;">Hardware</h3><div class="t" style="left:1056.83px;top:461.00px;font-size:23.5px;line-height:31px;color:#08a6b7;letter-spacing:-0.350px;transform:scaleX(0.9661);-webkit-text-stroke:0.35px #e3f3fc;">16%</div></div><div class="catitem"><h3 class="t" style="left:1203.70px;top:412.00px;font-size:14px;line-height:18px;color:#4a4a55;letter-spacing:0.163px;">Software</h3><div class="t" style="left:1267.33px;top:461.00px;font-size:23.5px;line-height:31px;color:#08a6b7;letter-spacing:-0.350px;transform:scaleX(0.9749);-webkit-text-stroke:0.35px #e3f3fc;">19%</div></div><div class="catitem"><h3 class="t" style="left:1414.20px;top:412.00px;font-size:14px;line-height:18px;color:#4a4a55;letter-spacing:-0.269px;">Services</h3><div class="t" style="left:1476.40px;top:461.00px;font-size:23.5px;line-height:31px;color:#08a6b7;letter-spacing:-0.350px;-webkit-text-stroke:0.35px #e3f3fc;">24%</div></div><div class="catitem"><h3 class="t" style="left:1624.60px;top:412.00px;font-size:14px;line-height:18px;color:#4a4a55;letter-spacing:0.350px;transform:scaleX(1.0068);">Other</h3><div class="t" style="left:1688.20px;top:461.00px;font-size:23.5px;line-height:31px;color:#08a6b7;letter-spacing:-0.350px;transform:scaleX(0.9431);-webkit-text-stroke:0.35px #e3f3fc;">5%</div></div></section>
<section id="itspend"><h2 class="t" style="left:45.20px;top:593.00px;font-size:16px;line-height:21px;color:#4a4a55;letter-spacing:0.061px;">Digital Spend as a % of IT Spend</h2><div class="t" style="left:269.91px;top:696.00px;font-size:36px;line-height:47px;color:#08a6b7;letter-spacing:-0.432px;transform:scaleX(0.9925);-webkit-text-stroke:0.45px #f5fafe;">20.7%</div></section>
<section id="peremployee"><h2 class="t" style="left:661.90px;top:593.00px;font-size:16px;line-height:21px;color:#4a4a55;letter-spacing:0.140px;">Digital Spend Per Employee</h2><div class="t" style="left:894.50px;top:698.00px;font-size:36px;line-height:47px;color:#08a6b7;letter-spacing:0.015px;-webkit-text-stroke:0.45px #f5fafe;">$13,007</div><div class="t" style="left:913.20px;top:745.00px;font-size:14px;line-height:18px;color:#9fa6a9;letter-spacing:0.123px;">Per Employee</div></section>
<section id="employees"><h2 class="t" style="left:1293.70px;top:593.00px;font-size:16px;line-height:21px;color:#4a4a55;letter-spacing:0.134px;">Digital Employees as a % of Company Employees</h2><div class="t" style="left:1498.21px;top:696.00px;font-size:36px;line-height:47px;color:#08a6b7;letter-spacing:-0.432px;transform:scaleX(0.9854);-webkit-text-stroke:0.45px #f5fafe;">9.7%</div></section>
<section id="dedicated"><h2 class="t" style="left:29.00px;top:856.00px;font-size:16px;line-height:21px;color:#4a4a55;letter-spacing:0.287px;">Employees Dedicated to Digital</h2></section>
<section id="coes"><h2 class="t" style="left:965.80px;top:856.00px;font-size:16px;line-height:21px;color:#4a4a55;letter-spacing:0.029px;">Where Companies have CoEs</h2></section>
</main>
</div>
</body></html>
